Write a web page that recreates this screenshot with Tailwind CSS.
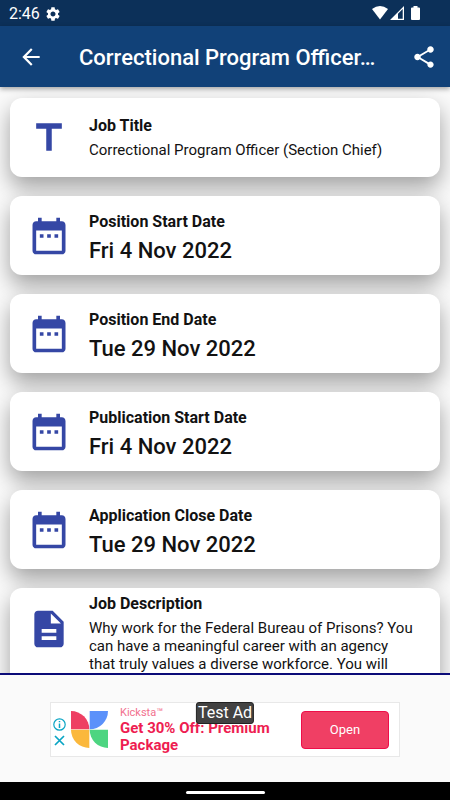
<!DOCTYPE html>
<html lang="en">
<head>
<meta charset="utf-8">
<meta name="viewport" content="width=device-width, initial-scale=1">
<title>Job details</title>
<script src="https://cdn.jsdelivr.net/npm/@tailwindcss/browser@4"></script>
</head>
<body class="flex h-screen flex-col overflow-hidden bg-[#fafafa] font-[Roboto,sans-serif] text-[#121212]">
<svg class="hidden" aria-hidden="true">
  <symbol id="date" viewBox="0 0 24 24"><path d="M9 11H7v2h2v-2zm4 0h-2v2h2v-2zm4 0h-2v2h2v-2zm2-7h-1V2h-2v2H8V2H6v2H5c-1.11 0-1.99.9-1.99 2L3 20c0 1.1.89 2 2 2h14c1.1 0 2-.9 2-2V6c0-1.1-.9-2-2-2zm0 16H5V9h14v11z"/></symbol>
</svg>

<div class="flex h-[26px] shrink-0 items-center justify-between bg-[#0c3059] pr-[30px] pl-[9px] text-white">
  <div class="flex items-center gap-[6px] pt-px">
    <span class="text-base">2:46</span>
    <svg class="size-[14px]" viewBox="2 2 20 20" fill="currentColor"><path fill-rule="evenodd" d="M19.140 12.940c.04-.3.06-.61.06-.94 0-.32-.02-.64-.07-.94l2.030-1.580c.18-.14.23-.41.12-.61l-1.920-3.320c-.12-.22-.37-.29-.59-.22l-2.390.96c-.5-.38-1.030-.7-1.620-.94l-.36-2.540c-.04-.24-.24-.41-.48-.41h-3.840c-.24 0-.43.17-.47.41l-.36 2.540c-.59.24-1.130.57-1.620.94l-2.390-.96c-.22-.08-.47 0-.59.22L2.740 8.870c-.12.21-.08.47.12.61l2.030 1.580c-.05.3-.09.63-.09.94s.02.64.07.94l-2.030 1.580c-.18.14-.23.41-.12.61l1.920 3.320c.12.22.37.29.59.22l2.390-.96c.5.38 1.030.7 1.620.94l.36 2.540c.05.24.24.41.48.41h3.840c.24 0 .44-.17.47-.41l.36-2.540c.59-.24 1.130-.56 1.620-.94l2.390.96c.22.08.47 0 .59-.22l1.920-3.320c.12-.22.07-.47-.12-.61l-2.010-1.580zM12 15.600c-1.980 0-3.600-1.620-3.600-3.600s1.620-3.600 3.600-3.600 3.600 1.620 3.600 3.600-1.620 3.600-3.600 3.600z"/></svg>
  </div>
  <div class="flex items-center">
    <svg class="h-[14px] w-4" viewBox="0 0 16 14" fill="currentColor"><path d="M0 3Q8-3 16 3L8 13.500z"/></svg>
    <svg class="ml-[2px] h-[14px] w-[14px]" viewBox="0 0 14 14"><path fill="currentColor" fill-rule="evenodd" d="M14 0V14H0zM12.700 3L8 7.700V12.700H12.700z"/></svg>
    <svg class="ml-[7px] h-[14px] w-[9px]" viewBox="0 0 9 14" fill="currentColor"><path d="M2.500 0H6.500V1.400H8Q9 1.400 9 2.400V13Q9 14 8 14H1Q0 14 0 13V2.400Q0 1.400 1 1.400H2.500z"/></svg>
  </div>
</div>

<header class="relative z-10 flex h-[61px] shrink-0 items-center bg-[#114178] pr-[13px] pl-[18px] text-white shadow-[0_2px_5px_rgba(0,0,0,0.35)]">
  <button type="button" aria-label="Back"><svg class="size-[26px]" viewBox="0 0 24 24" fill="currentColor"><path d="M20 11H7.830l5.590-5.590L12 4l-8 8 8 8 1.410-1.410L7.830 13H20v-2z"/></svg></button>
  <h1 class="ml-[35px] flex-1 pt-[2px] text-[22px] font-medium whitespace-nowrap">Correctional Program Officer…</h1>
  <button type="button" aria-label="Share"><svg class="size-[26px]" viewBox="0 0 24 24" fill="currentColor"><path d="M18 16.080c-.76 0-1.440.3-1.960.77L8.910 12.700c.05-.23.09-.46.09-.7s-.04-.47-.09-.7l7.050-4.110c.54.5 1.250.81 2.040.81 1.660 0 3-1.340 3-3s-1.340-3-3-3-3 1.340-3 3c0 .24.04.47.09.7L8.040 9.810C7.500 9.310 6.790 9 6 9c-1.660 0-3 1.340-3 3s1.340 3 3 3c.79 0 1.500-.31 2.040-.81l7.120 4.160c-.05.21-.08.43-.08.65 0 1.610 1.310 2.920 2.920 2.920s2.920-1.310 2.920-2.920-1.310-2.920-2.920-2.920z"/></svg></button>
</header>

<main class="flex min-h-0 flex-1 flex-col gap-[19px] overflow-hidden bg-[#fafafa] px-[10px] pt-[11px]">
  <section class="flex min-h-[79px] shrink-0 items-center gap-[18px] rounded-xl bg-white px-[17px] shadow-[0_10px_22px_rgba(0,0,0,0.36)]">
    <svg class="size-11 shrink-0 text-[#3547a5]" viewBox="0 0 24 24" fill="currentColor"><path d="M5 4v3h5.500v12h3V7H19V4z"/></svg>
    <div><h2 class="text-base leading-6 font-bold">Job Title</h2><p class="text-[15px] leading-6">Correctional Program Officer (Section Chief)</p></div>
  </section>
  <section class="flex min-h-[79px] shrink-0 items-center gap-[18px] rounded-xl bg-white px-[17px] shadow-[0_10px_22px_rgba(0,0,0,0.36)]">
    <svg class="size-11 shrink-0 text-[#3547a5]" fill="currentColor"><use href="#date"/></svg>
    <div class="pt-[2px]"><h2 class="text-base leading-7 font-bold">Position Start Date</h2><p class="text-[22px] leading-[30px] font-medium">Fri 4 Nov 2022</p></div>
  </section>
  <section class="flex min-h-[79px] shrink-0 items-center gap-[18px] rounded-xl bg-white px-[17px] shadow-[0_10px_22px_rgba(0,0,0,0.36)]">
    <svg class="size-11 shrink-0 text-[#3547a5]" fill="currentColor"><use href="#date"/></svg>
    <div class="pt-[2px]"><h2 class="text-base leading-7 font-bold">Position End Date</h2><p class="text-[22px] leading-[30px] font-medium">Tue 29 Nov 2022</p></div>
  </section>
  <section class="flex min-h-[79px] shrink-0 items-center gap-[18px] rounded-xl bg-white px-[17px] shadow-[0_10px_22px_rgba(0,0,0,0.36)]">
    <svg class="size-11 shrink-0 text-[#3547a5]" fill="currentColor"><use href="#date"/></svg>
    <div class="pt-[2px]"><h2 class="text-base leading-7 font-bold">Publication Start Date</h2><p class="text-[22px] leading-[30px] font-medium">Fri 4 Nov 2022</p></div>
  </section>
  <section class="flex min-h-[79px] shrink-0 items-center gap-[18px] rounded-xl bg-white px-[17px] shadow-[0_10px_22px_rgba(0,0,0,0.36)]">
    <svg class="size-11 shrink-0 text-[#3547a5]" fill="currentColor"><use href="#date"/></svg>
    <div class="pt-[2px]"><h2 class="text-base leading-7 font-bold">Application Close Date</h2><p class="text-[22px] leading-[30px] font-medium">Tue 29 Nov 2022</p></div>
  </section>
  <section class="flex shrink-0 items-start gap-[18px] rounded-xl bg-white pr-[17px] pb-8 pl-[17px] shadow-[0_10px_22px_rgba(0,0,0,0.36)]">
    <svg class="mt-[19px] size-11 shrink-0 text-[#3547a5]" viewBox="0 0 24 24" fill="currentColor"><path d="M14 2H6c-1.100 0-1.990.9-1.990 2L4 20c0 1.100.89 2 1.990 2H18c1.100 0 2-.9 2-2V8l-6-6zm2 16H8v-2h8v2zm0-4H8v-2h8v2zm-3-5V3.500L18.500 9H13z"/></svg>
    <div class="pt-1"><h2 class="text-base leading-6 font-bold">Job Description</h2><p class="pt-[3px] text-[15px] leading-[18px]">Why work for the Federal Bureau of Prisons? You<br>can have a meaningful career with an agency<br>that truly values a diverse workforce. You will</p></div>
  </section>
</main>

<aside class="relative z-10 flex h-[109px] shrink-0 justify-center border-t-2 border-[#0b0b78] bg-[#fafafa] pt-[27px]" aria-label="Advertisement">
  <div class="relative flex h-[55px] w-[350px] items-center border border-[#e8e8e8] bg-white pr-[10px] pl-[2px]">
    <div class="flex flex-col items-center gap-1 pt-[5px] text-[#0aa5c4]">
      <button type="button" aria-label="Ad information"><svg class="block size-[13px]" viewBox="0 0 13 13" fill="none" stroke="currentColor"><circle cx="6.500" cy="6.500" r="5.700" stroke-width="1.200"/><path d="M6.500 5.500V10M6.500 3V4.300" stroke-width="1.500"/></svg></button>
      <button type="button" aria-label="Close ad"><svg class="block size-[11px]" viewBox="0 0 11 11" fill="none" stroke="currentColor" stroke-width="1.700"><path d="M1 1L10 10M10 1L1 10"/></svg></button>
    </div>
    <svg class="ml-[5px] size-[37px]" viewBox="0 0 37 37"><path fill="#ee3f63" d="M0 0A18.300 18.300 0 0 1 18.300 18.300H0z"/><path fill="#5b91fa" d="M18.700 0H37A18.300 18.300 0 0 1 18.700 18.300z"/><path fill="#fbb83c" d="M0 18.700H18.300V37A18.300 18.300 0 0 1 0 18.700z"/><path fill="#4dd581" d="M18.700 18.700H37V37A18.300 18.300 0 0 1 18.700 18.700z"/></svg>
    <div class="ml-3 w-[160px] text-[#ee1d51]"><p class="text-[11px] leading-[14px] text-[#f2708e]">Kicksta™</p><p class="text-[15px] leading-[17px] font-bold whitespace-nowrap">Get 30% Off: Premium<br>Package</p></div>
    <button type="button" class="ml-auto h-[38px] w-[88px] rounded-[4px] border border-[#ee0e49] bg-[#f03f64] text-[13px] text-white">Open</button>
    <span class="absolute -top-px left-1/2 -translate-x-1/2 rounded-[3px] border border-[#222] bg-[#424242] px-px text-base leading-5 whitespace-nowrap text-white">Test Ad</span>
  </div>
</aside>
<div class="flex h-[18px] shrink-0 items-center justify-center bg-black pt-[2px]"><div class="h-[3px] w-[79px] rounded-full bg-white"></div></div>
</body>
</html>
